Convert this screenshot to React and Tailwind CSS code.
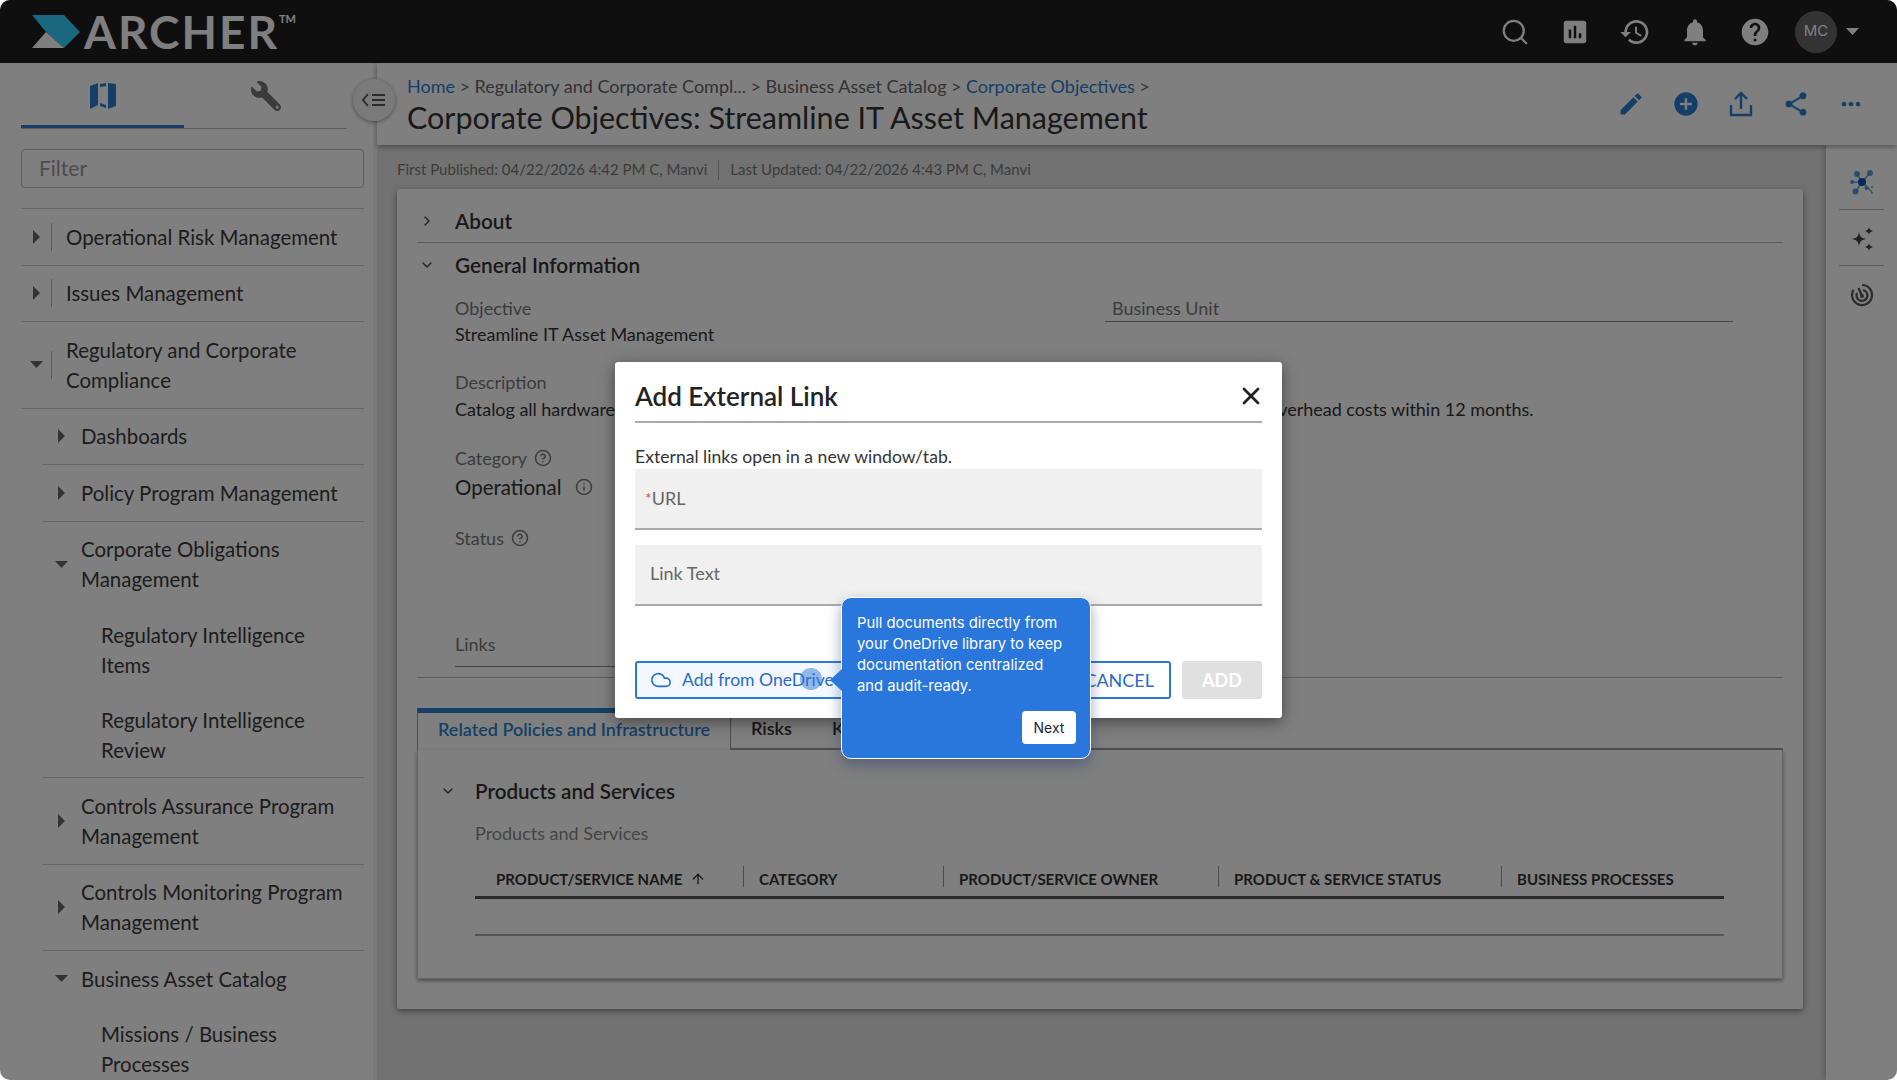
import React from "react";
import { ArrowUp, ChevronDown, ChevronRight, CircleHelp, Cloud, Info, Search, X } from "lucide-react";
import { MdAddCircle, MdAssessment, MdEdit, MdHelp, MdHistory, MdMoreHoriz, MdNotifications, MdShare } from "react-icons/md";
import { FaWrench } from "react-icons/fa";

const BLUE = "text-[#2b7fd0]";

function CaretRight() {
  return (
    <svg width="7" height="14" viewBox="0 0 7 14" className="fill-[#666]">
      <path d="M0 0l7 7-7 7z" />
    </svg>
  );
}

function CaretDown() {
  return (
    <svg width="13" height="7" viewBox="0 0 13 7" className="fill-[#666]">
      <path d="M0 0h13L6.500 7z" />
    </svg>
  );
}

// top level sidebar row, has the small separator beside the caret
function TopRow({ open, lines }) {
  return (
    <div className="flex items-center border-b border-[#ccc] py-[12.75px]">
      <div className="flex w-[30px] shrink-0 justify-center pl-[1px]">{open ? <CaretDown /> : <CaretRight />}</div>
      <div className="mr-[14px] h-[28px] w-px shrink-0 bg-[#bbb]" />
      <div className="text-[20.45px] leading-[30px] text-[#3a3a3a]">
        {lines.map((l) => (
          <div key={l}>{l}</div>
        ))}
      </div>
    </div>
  );
}

function SubRow({ open, lines, last }) {
  return (
    <div className={`ml-[21px] flex items-center py-[12.75px] ${last ? "" : "border-b border-[#ccc]"}`}>
      <div className="flex w-[39px] shrink-0 justify-center">{open ? <CaretDown /> : <CaretRight />}</div>
      <div className="text-[20.45px] leading-[30px] text-[#3a3a3a]">
        {lines.map((l) => (
          <div key={l}>{l}</div>
        ))}
      </div>
    </div>
  );
}

function LeafRow({ lines }) {
  return (
    <div className="ml-[80px] py-[12.5px] text-[20.45px] leading-[30px] text-[#3a3a3a]">
      {lines.map((l) => (
        <div key={l}>{l}</div>
      ))}
    </div>
  );
}

function Sidebar() {
  return (
    <aside className="h-[1017px] w-[373px] shrink-0 overflow-hidden bg-white pl-[21px] pr-[9px]">
      <div className="mr-[17px] flex h-[66px] border-b border-[#bbb]">
        <div className={`flex w-[163px] items-center justify-center border-b-[3px] border-[#2b7fd0] pt-[4px] ${BLUE}`}>
          <svg width="26" height="26" viewBox="0 0 26 26" fill="currentColor">
            <path d="M0 3l8-3v22l-8 4zM18 0l8 1v22l-8 3zM10 1l6-1v25l-6-2z" fillRule="evenodd" opacity="1" />
            <path d="M10 4l6-1v19l-6-2z" fill="#fff" />
          </svg>
        </div>
        <div className="flex flex-1 items-center justify-center text-[#777]">
          <FaWrench size={30} className="-scale-x-100" />
        </div>
      </div>
      <div className="mt-[20px] flex h-[39px] items-center rounded border border-[#bbb] px-[17px] pb-px text-[21px] text-[#999]">Filter</div>
      <div className="mt-[20px] border-t border-[#ccc]">
        <TopRow lines={["Operational Risk Management"]} />
        <TopRow lines={["Issues Management"]} />
        <TopRow open lines={["Regulatory and Corporate", "Compliance"]} />
        <SubRow lines={["Dashboards"]} />
        <SubRow lines={["Policy Program Management"]} />
        <SubRow open last lines={["Corporate Obligations", "Management"]} />
        <LeafRow lines={["Regulatory Intelligence", "Items"]} />
        <LeafRow lines={["Regulatory Intelligence", "Review"]} />
        <div className="ml-[21px] border-b border-[#ccc]" />
        <SubRow lines={["Controls Assurance Program", "Management"]} />
        <SubRow lines={["Controls Monitoring Program", "Management"]} />
        <SubRow open last lines={["Business Asset Catalog"]} />
        <LeafRow lines={["Missions / Business", "Processes"]} />
      </div>
    </aside>
  );
}

function TopBar() {
  return (
    <header className="flex h-[63px] items-center bg-[#1e1e1e] pl-[32px] pr-[38.5px] text-white">
      <svg width="50" height="34" viewBox="0 0 50 34" className="shrink-0">
        <path d="M0 0h32l16 17-16 16-18-16z" fill="#34d0ff" />
        <path d="M0 33l14-16 18 16z" fill="#fff" />
      </svg>
      <div className="ml-[2px] flex items-start font-bold">
        <span className="text-[46px] leading-[50px] tracking-[2px]">ARCHER</span>
        <span className="mt-[6px] text-[11px] leading-[12px]">TM</span>
      </div>
      <div className="ml-auto flex items-center">
        <Search size={30} strokeWidth={1.8} />
        <MdAssessment size={30} className="ml-[30px]" />
        <MdHistory size={32} className="ml-[29px]" />
        <MdNotifications size={32} className="ml-[28px]" />
        <MdHelp size={32} className="ml-[28px]" />
        <div className="ml-[24px] flex h-[42px] w-[42px] items-center justify-center rounded-full bg-[#666] font-['Inter',sans-serif] text-[15px]">MC</div>
        <svg width="13" height="7" viewBox="0 0 13 7" className="ml-[8.5px] fill-white">
          <path d="M0 0h13L6.500 7z" />
        </svg>
      </div>
    </header>
  );
}

function TitleBar() {
  return (
    <div className="relative flex h-[82px] items-center bg-white pl-[30px] pr-[32px] shadow-[0_2px_5px_rgba(0,0,0,0.35)]">
      <div className="pt-px">
        <div className="flex items-center gap-[4.5px] text-[18px] leading-[24px] text-[#666]">
          <span className={BLUE}>Home</span>
          <span>&gt;</span>
          <span>Regulatory and Corporate Compl...</span>
          <span>&gt;</span>
          <span>Business Asset Catalog</span>
          <span>&gt;</span>
          <span className={BLUE}>Corporate Objectives</span>
          <span>&gt;</span>
        </div>
        <div className="text-[30.5px] leading-[38px] text-[#333]">Corporate Objectives: Streamline IT Asset Management</div>
      </div>
      <div className={`ml-auto flex items-center gap-[27px] ${BLUE}`}>
        <MdEdit size={28} />
        <MdAddCircle size={28} />
        <svg width="28" height="28" viewBox="0 0 28 28" fill="none" stroke="currentColor" strokeWidth="2.400">
          <path d="M14 19V4M8 9l6-6 6 6M4 15v10h20V15" />
        </svg>
        <MdShare size={28} />
        <MdMoreHoriz size={28} />
      </div>
    </div>
  );
}

function RightRail() {
  return (
    <div className="flex w-[71px] shrink-0 flex-col items-center bg-white shadow-[-2px_0_5px_rgba(0,0,0,0.2)]">
      <div className="flex h-[65px] w-[45px] items-center justify-center border-b border-[#bbb] pt-[11px]">
        <svg width="24" height="26" viewBox="0 0 24 26" className={BLUE}>
          <path d="M12 12L7 4M12 12L20 3M12 12H2M12 12l-6 9M12 12l7 7M19 19l3 3" stroke="currentColor" strokeOpacity=".7" strokeWidth="1.500" />
          <g fill="currentColor" fillOpacity=".75">
            <circle cx="7" cy="4" r="3" />
            <circle cx="20" cy="3" r="3" />
            <circle cx="2" cy="12" r="2" />
            <circle cx="5.500" cy="21.500" r="3" />
            <circle cx="16.500" cy="18" r="2" />
            <circle cx="22" cy="17" r="1" />
            <circle cx="22" cy="23" r="1" />
          </g>
          <circle cx="12" cy="12" r="4" fill="#0f50b8" />
        </svg>
      </div>
      <div className="flex h-[56px] w-[45px] items-center justify-center border-b border-[#bbb] pt-[2px]">
        <svg width="24" height="24" viewBox="0 0 24 24" fill="#444">
          <path d="M9 5c1 5 2.500 6 7 7-4.500 1-6 2-7 7-1-5-2.500-6-7-7 4.500-1 6-2 7-7zM19 0c.4 2.500 1.200 3 4 4-2.800 1-3.600 1.500-4 4-.4-2.500-1.200-3-4-4 2.800-1 3.600-1.500 4-4zM19 16c.4 2.500 1.200 3 4 4-2.800 1-3.600 1.500-4 4-.4-2.500-1.200-3-4-4 2.800-1 3.600-1.500 4-4z" />
        </svg>
      </div>
      <div className="flex h-[56px] items-center justify-center pt-[2px]">
        <svg width="24" height="24" viewBox="0 0 24 24" fill="none" stroke="#555" strokeWidth="2.200">
          <path d="M12 2A10 10 0 1 1 3.500 6.800" />
          <path d="M13 7A5.500 5.500 0 1 1 7 10" />
          <path d="M12 13L8.500 5" />
          <circle cx="12" cy="13" r="2" fill="#555" stroke="none" />
        </svg>
      </div>
    </div>
  );
}

function RecordCard() {
  const columns = [
    { name: "PRODUCT/SERVICE NAME", w: "w-[268px]", pl: "pl-[21px]" },
    { name: "CATEGORY", w: "w-[200px]", pl: "pl-[15px]" },
    { name: "PRODUCT/SERVICE OWNER", w: "w-[275px]", pl: "pl-[15px]" },
    { name: "PRODUCT & SERVICE STATUS", w: "w-[283px]", pl: "pl-[15px]" },
    { name: "BUSINESS PROCESSES", w: "flex-1", pl: "pl-[15px]" },
  ];
  return (
    <div className="rounded-[3px] bg-white px-[20px] shadow-[0_2px_6px_rgba(0,0,0,0.45)]">
      <div className="flex h-[54px] items-center border-b border-[#bbb] pt-[10px]">
        <ChevronRight size={16} className="ml-[2px] mr-[20px] text-[#444]" />
        <span className="text-[20.8px] font-semibold text-[#333]">About</span>
      </div>
      <div className="flex h-[52px] items-center pb-[8px]">
        <ChevronDown size={16} className="ml-[2px] mr-[20px] text-[#444]" />
        <span className="text-[20.8px] font-semibold text-[#333]">General Information</span>
      </div>
      <div className="pl-[38px] text-[18px] leading-[26px]">
        <div className="flex">
          <div className="w-[650px]">
            <div className="text-[#777]">Objective</div>
            <div className="text-[#333]">Streamline IT Asset Management</div>
          </div>
          <div className="h-[27px] w-[628px] border-b border-[#888] pl-[7px] text-[#777]">Business Unit</div>
        </div>
        <div className="mt-[22px] text-[#777]">Description</div>
        <div className="mt-px whitespace-nowrap tracking-[-0.03px] text-[#333]">
          Catalog all hardware and software assets across the business to eliminate redundant license and reduce overhead costs within 12 months.
        </div>
        <div className="mt-[23px] flex items-center gap-[7px] text-[#777]">
          Category <CircleHelp size={18} />
        </div>
        <div className="mt-[3px] flex items-center gap-[13px] text-[20.5px] text-[#333]">
          Operational <Info size={18} className="text-[#777]" />
        </div>
        <div className="mt-[25px] flex items-center gap-[7px] text-[#777]">
          Status <CircleHelp size={18} />
        </div>
        <div className="mt-[80px] h-[36px] w-[600px] border-b border-[#888] text-[#777]">Links</div>
      </div>
      <div className="mt-[10px] border-b border-[#bbb]" />
      <div className="mt-[30px] flex h-[42px] text-[18px] font-semibold">
        <div className={`flex w-[314px] items-center border-x border-t-[5px] border-x-[#999] border-t-[#2b7fd0] pb-[4px] pl-[20px] ${BLUE}`}>
          Related Policies and Infrastructure
        </div>
        <div className="flex flex-1 items-center gap-[40px] border-b-2 border-[#999] pl-[20px] text-[#333]">
          <span>Risks</span>
          <span>Key Controls</span>
        </div>
      </div>
      <div className="h-[229px] border-x border-b border-[#ccc] pl-[22px] pr-[58px] shadow-[0_2px_4px_rgba(0,0,0,0.4)]">
        <div className="flex h-[70px] items-center pt-[12px]">
          <ChevronDown size={16} className="mr-[19px] text-[#444]" />
          <span className="text-[20.6px] font-semibold text-[#333]">Products and Services</span>
        </div>
        <div className="ml-[35px]">
          <div className="text-[18px] leading-[26px] text-[#888]">Products and Services</div>
          <div className="mt-[20px] flex h-[33px] border-b-[3px] border-[#555] text-[15px] font-bold text-[#333]">
            {columns.map((c, i) => (
              <div key={c.name} className={`flex h-[21px] items-center ${c.w} ${c.pl} ${i > 0 ? "border-l border-[#999]" : ""}`}>
                <span className="mt-[5px] flex items-center gap-[8px] whitespace-nowrap">
                  {c.name}
                  {i === 0 && <ArrowUp size={16} />}
                </span>
              </div>
            ))}
          </div>
          <div className="h-[37px] border-b-2 border-[#aaa]" />
        </div>
      </div>
      <div className="h-[30px]" />
    </div>
  );
}

function ExternalLinkModal() {
  return (
    <div className="absolute left-[615px] top-[362px] h-[356px] w-[667px] rounded-[3px] bg-white px-[20px] shadow-[0_4px_16px_rgba(0,0,0,0.45)]">
      <div className="flex h-[61px] items-center justify-between border-b-2 border-[#aaa] pt-[9px]">
        <span className="text-[26px] font-semibold text-[#222]">Add External Link</span>
        <X size={28} strokeWidth={2.4} className="-mr-[3px] text-[#222]" />
      </div>
      <div className="mt-[21px] text-[17.6px] leading-[25px] text-[#333]">External links open in a new window/tab.</div>
      <div className="flex h-[61px] items-center border-b-2 border-[#aaa] bg-[#f0f0f0] pl-[10px] text-[18px] text-[#666]">
        <span className="-mt-[2px] text-[16px] text-[#d0532a]">*</span>URL
      </div>
      <div className="mt-[15px] flex h-[61px] items-center border-b-2 border-[#aaa] bg-[#f0f0f0] pb-[2px] pl-[15px] text-[18px] text-[#666]">Link Text</div>
      <div className="mt-[55px] flex items-center">
        <div className="flex h-[38px] w-[225px] items-center rounded-[3px] border-2 border-[#2b78d6] bg-[#f3f8fe] pl-[13px] text-[17.6px] text-[#2b6cc4]">
          <Cloud size={22} strokeWidth={1.8} />
          <span className="ml-[10px] whitespace-nowrap">Add from OneDrive</span>
        </div>
        <div className="ml-auto flex h-[38px] w-[110px] items-center justify-end rounded-[3px] border-2 border-[#2b78d6] pr-[15px] text-[18px] text-[#2b6cc4]">CANCEL</div>
        <div className="ml-[11px] flex h-[38px] w-[80px] items-center justify-center rounded-[3px] bg-[#e0e0e0] text-[18px] font-bold text-white">ADD</div>
      </div>
    </div>
  );
}

function OneDriveTip() {
  return (
    <>
      <div className="absolute left-[800px] top-[668px] h-[22px] w-[22px] rounded-full bg-[#2b78d6]/50" />
      <div className="absolute left-[841px] top-[597px] h-[162px] w-[250px] rounded-[10px] border border-white bg-[#2976dc] pl-[15px] pr-[10px] pt-[15px] font-['Inter',sans-serif] text-[14.8px] leading-[21px] text-white shadow-[0_6px_14px_rgba(40,60,110,0.45)]">
        <div className="absolute -left-[12px] top-[71px] h-0 w-0 border-y-[11px] border-r-[12px] border-y-transparent border-r-[#2976dc]" />
        <div>
          Pull documents directly from
          <br />
          your OneDrive library to keep
          <br />
          documentation centralized
          <br />
          and audit-ready.
        </div>
        <div className="absolute bottom-[14px] right-[14px] flex h-[33px] w-[54px] items-center justify-center rounded-[4px] bg-white text-[14px] text-[#1a2440]">Next</div>
      </div>
    </>
  );
}

export default function App() {
  return (
    <div className="h-screen w-full overflow-hidden bg-white">
      <div className="relative h-full w-full overflow-hidden rounded-[10px] font-['Lato',sans-serif]">
        <TopBar />
        <div className="flex">
          <Sidebar />
          <main className="flex h-[1017px] flex-1 flex-col border-l-[4px] border-[#f2f2f2] bg-[#e2e5e2]">
            <TitleBar />
            <div className="flex flex-1">
              <div className="flex-1 pl-[20px] pr-[23px]">
                <div className="flex h-[44px] items-center pt-[5px] text-[15px] text-[#777]">
                  <span>First Published: 04/22/2026 4:42 PM C, Manvi</span>
                  <span className="mx-[11px] h-[20px] w-px bg-[#aaa]" />
                  <span>Last Updated: 04/22/2026 4:43 PM C, Manvi</span>
                </div>
                <RecordCard />
              </div>
              <RightRail />
            </div>
          </main>
        </div>
        {/* collapse toggle sits over the sidebar edge */}
        <div className="absolute left-[353px] top-[79px] flex h-[42px] w-[42px] items-center justify-center rounded-full bg-[#f4f4f4] text-[#555] shadow-[0_1px_4px_rgba(0,0,0,0.4)]">
          <svg width="24" height="16" viewBox="0 0 24 16" fill="none" stroke="currentColor" strokeWidth="1.800">
            <path d="M6 2L1 8l5 6M10 3h13M10 8h13M10 13h13" />
          </svg>
        </div>
        <div className="absolute inset-0 bg-black/50" />
        <ExternalLinkModal />
        <OneDriveTip />
      </div>
    </div>
  );
}
